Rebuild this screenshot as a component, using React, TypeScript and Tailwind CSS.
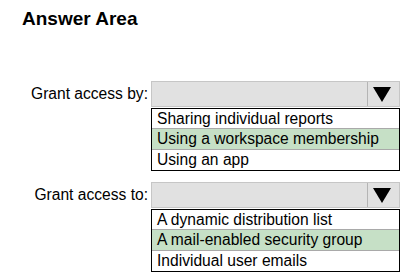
const blocks = [
  {
    label: 'Grant access by:',
    options: ['Sharing individual reports', 'Using a workspace membership', 'Using an app'],
  },
  {
    label: 'Grant access to:',
    options: ['A dynamic distribution list', 'A mail-enabled security group', 'Individual user emails'],
  },
]

function Arrow() {
  return (
    <svg width="18" height="15" viewBox="0 0 18 15">
      <polygon points="0,0 18,0 9,15" fill="#000" />
    </svg>
  )
}

function Dropdown({ label, options }: { label: string; options: string[] }) {
  return (
    <div className="flex items-start">
      <div className="w-[148px] h-[26px] flex items-center justify-end text-[15.6px] text-black whitespace-nowrap">{label}</div>
      <div className="ml-[3px] w-[249px]">
        <div className="h-[26px] flex border border-[#c6c6c6] bg-[#e1e1e1]">
          <div className="flex-1" />
          <div className="w-[32px] border-l border-[#b4b4b4] flex items-center justify-center pr-[3px]">
            <Arrow />
          </div>
        </div>
        <div className="mt-[1px] border border-black bg-white text-[15.6px] text-black leading-[20px] whitespace-nowrap">
          <div className="h-[19px] pl-[5px] leading-[19px]">{options[0]}</div>
          <div className="h-[22px] pl-[5px] bg-[#c6e0c6] border-y border-[#a9a9a9]">{options[1]}</div>
          <div className="h-[20px] pl-[5px]">{options[2]}</div>
        </div>
      </div>
    </div>
  )
}

export default function App() {
  return (
    <div className="w-[408px] h-[279px] bg-white font-['Liberation_Sans',Arial,sans-serif]">
      <div className="pt-[9px] pl-[22px] text-[19px] leading-[19px] font-bold text-black">Answer Area</div>
      <div className="mt-[53px] flex flex-col gap-[11px]">
        {blocks.map((b) => (
          <Dropdown key={b.label} label={b.label} options={b.options} />
        ))}
      </div>
    </div>
  )
}
